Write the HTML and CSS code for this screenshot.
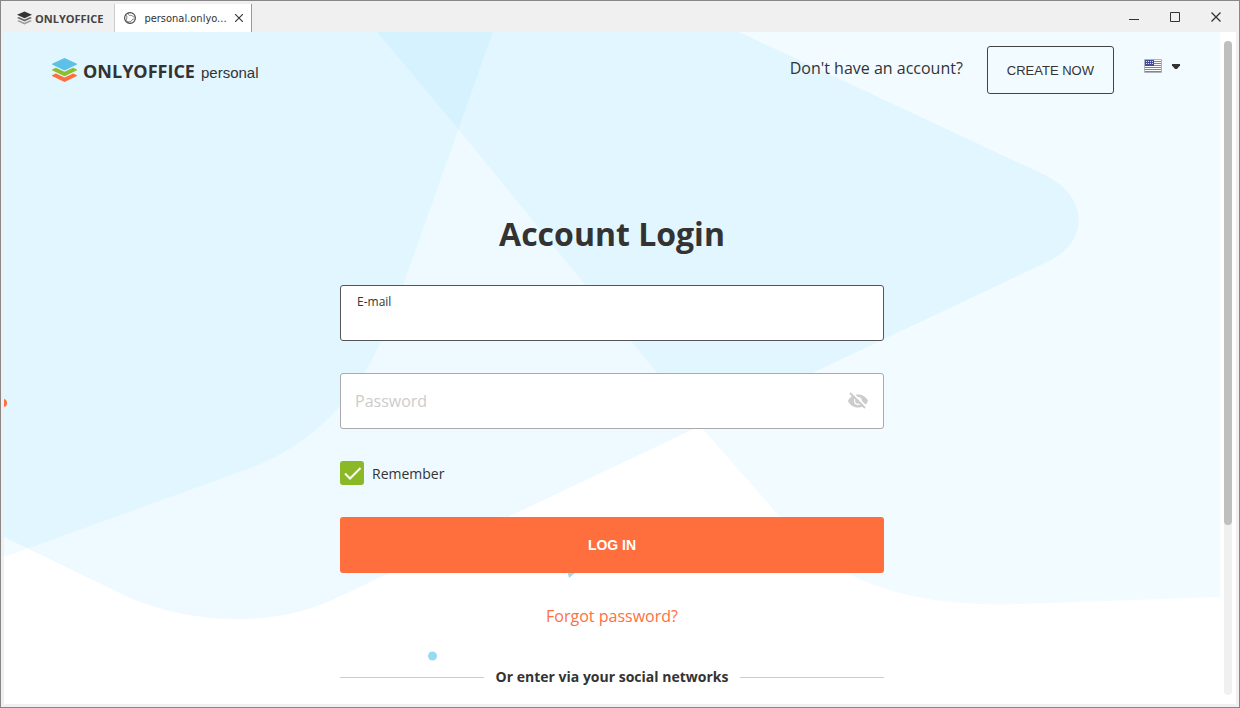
FILE: index.html
```html
<!DOCTYPE html>
<html lang="en">
<head>
  <meta charset="UTF-8">
  <title>ONLYOFFICE</title>
  <link rel="stylesheet" href="styles.css">
</head>
<body>

<div class="window">
  <div class="titlebar">
    <div class="tabs">
      <button class="tab home">
        <svg width="15" height="14" viewBox="0 0 16 14">
          <path fill="#333" d="M8 0l8 3.6-8 3.7-8-3.7z"/>
          <path fill="#6b6b6b" d="M0 6.900l2-.9 6 2.700 6-2.700 2 .9-8 3.700z"/>
          <path fill="#999" d="M0 10.200l2-.9 6 2.700 6-2.700 2 .9-8 3.700z"/>
        </svg>
        <span>ONLYOFFICE</span>
      </button>
      <div class="tab page-tab">
        <svg width="12" height="12" viewBox="0 0 12 12" fill="none" stroke="#444">
          <circle cx="6" cy="6" r="5.400" stroke-width="1.100"/>
          <path stroke-width=".7" d="M4.500 1c-1 2 .5 2.500 3 2.500 1.500.5 2.500 2 3.500 1.500M1.500 3c2 .5 1.500 3 .8 4.500C2 9 4 9.500 5 11M10.500 7c-1.500 0-2.500.5-3 1.800-.8 1.200-1.500 1-3 .7"/>
        </svg>
        <span class="tab-title">personal.onlyo...</span>
        <button class="tab-close" aria-label="Close tab">
          <svg width="8" height="8" viewBox="0 0 8 8"><path stroke="#333" stroke-width="1.100" d="M0 0l8 8M8 0L0 8"/></svg>
        </button>
      </div>
    </div>
    <div class="window-buttons">
      <button aria-label="Minimize">
        <svg width="12" height="12" viewBox="0 0 12 12"><path fill="#333" d="M1 8h10v1H1z"/></svg>
      </button>
      <button aria-label="Maximize">
        <svg width="12" height="12" viewBox="0 0 12 12"><path fill="none" stroke="#333" d="M1.500 1.500h9v9h-9z"/></svg>
      </button>
      <button aria-label="Close">
        <svg width="12" height="12" viewBox="0 0 12 12"><path stroke="#333" stroke-width="1.300" d="M1.500 1.500l9 9M10.500 1.500l-9 9"/></svg>
      </button>
    </div>
  </div>

  <div class="view">
    <div class="page">
      <svg class="backdrop" viewBox="0 0 1216 672" preserveAspectRatio="xMidYMin slice">
        <path fill="#55cdff" fill-opacity=".1" d="M0 0H735L1041 143C1087 166 1085 212 1041 231L326 569C266 595 188 592 126 566L0 505z"/>
        <path fill="#5fd2ff" fill-opacity=".08" d="M0 0H489L399 253C380 307 350 399 241 438L0 525z"/>
        <path fill="#5fd2ff" fill-opacity=".08" d="M373 0L455 98L698 396L776 485C835 558 920 575 1016 572L1216 565V0z"/>
        <circle cx="-1" cy="371" r="4" fill="#ff6f3d"/>
        <path fill="#97daf4" d="M563 538l9 2-7 6z"/>
        <circle cx="428.500" cy="624" r="4.500" fill="#97daf4"/>
      </svg>

      <div class="header">
        <a href="#" class="logo">
          <svg width="25" height="24" viewBox="0 0 26 25">
            <path fill="#ff6f3d" d="M0 18l4-1.800 9 4 9-4 4 1.800v.8L13 25 0 18.800z"/>
            <path fill="#8ebe2e" d="M0 12l4-1.800 9 4 9-4 4 1.800v.8L13 19 0 12.800z"/>
            <path fill="#5dc0e8" d="M13 0l13 6v.8L13 13 0 6.800V6z"/>
          </svg>
          <span class="brand">ONLYOFFICE</span>
          <span class="edition">personal</span>
        </a>
        <div class="account">
          <span class="question">Don't have an account?</span>
          <button class="create">CREATE NOW</button>
          <div class="language">
            <svg width="18" height="14" viewBox="0 0 18 14">
              <path fill="#fff" d="M0 0h18v14H0z"/>
              <path fill="#f0565b" d="M1 2h16v1H1zM1 4h16v1H1zM1 6h16v1H1zM1 8h16v1H1zM1 10h16v1H1zM1 12h16v1H1z"/>
              <path fill="#454a9c" d="M1 1h9v6H1z"/>
              <path stroke="#dfe0f5" stroke-dasharray="1 1" d="M2 2.500h8M2 4.500h8"/>
              <path fill="none" stroke="#aab4bb" d="M.5.5h17v13H.5z"/>
            </svg>
            <svg width="8" height="5" viewBox="0 0 8 5"><path fill="#333" d="M0 0h8v1.500L5 5H3L0 1.500z"/></svg>
            <select aria-label="Language">
              <option>English</option>
            </select>
          </div>
        </div>
      </div>

      <form class="login">
        <h1>Account Login</h1>
        <div class="field active">
          <label for="email">E-mail</label>
          <input type="email" id="email">
        </div>
        <div class="field">
          <input type="password" id="password" placeholder="Password" aria-label="Password">
          <button type="button" class="eye" aria-label="Show password">
            <svg width="20" height="18" viewBox="0 0 20 18">
              <path fill="#ccc" d="M10 2.500c4.500 0 8.300 2.600 10 6.500-1.700 3.900-5.500 6.500-10 6.500S1.700 12.900 0 9c1.700-3.900 5.500-6.500 10-6.500z"/>
              <circle cx="10" cy="9" r="4" fill="#fff"/>
              <circle cx="10" cy="9" r="2.800" fill="#ccc"/>
              <path stroke="#fff" stroke-width="2" d="M3.500 0l15 15"/>
              <path stroke="#ccc" stroke-width="2" d="M2 1l15 15"/>
            </svg>
          </button>
        </div>
        <label class="remember">
          <input type="checkbox" checked>
          <svg class="tick" width="24" height="24" viewBox="0 0 24 24"><path fill="none" stroke="#fff" stroke-width="2" d="M5 12.500l5 5L20.500 7"/></svg>
          <span>Remember</span>
        </label>
        <button class="submit">LOG IN</button>
        <a href="#" class="forgot">Forgot password?</a>
        <div class="social">Or enter via your social networks</div>
      </form>
    </div>
    <div class="scrollbar"><div class="thumb"></div></div>
  </div>
</div>

</body>
</html>
```
FILE: styles.css
```css
* {
  box-sizing: border-box;
}
body {
  margin: 0;
  font-family: 'Open Sans', sans-serif;
  color: #333;
}
button {
  border: none;
  background: none;
  padding: 0;
  color: inherit;
  cursor: pointer;
}
svg {
  display: block;
  flex: none;
}
.window {
  height: 100vh;
  display: flex;
  flex-direction: column;
  border: 1px solid #878787;
  padding: 0 3px 3px;
  background: #f0f0f0;
  overflow: hidden;
}

/* title bar */
.titlebar {
  display: flex;
  justify-content: space-between;
  height: 31px;
  flex: none;
}
.tabs {
  display: flex;
  align-items: flex-end;
}
.tab {
  display: flex;
  align-items: center;
  height: 28px;
}
.home {
  gap: 3px;
  padding: 0 11px 0 13px;
  color: #444;
  font: bold 11px 'Open Sans', sans-serif;
}
.page-tab {
  background: #fff;
  border-left: 1px solid #ccc;
  border-right: 1px solid #999;
  padding: 0 8px 0 9px;
  gap: 8px;
  font: 11px 'DejaVu Sans Condensed', 'DejaVu Sans', sans-serif;
}
.window-buttons {
  display: flex;
}
.window-buttons button {
  width: 41px;
  display: flex;
  align-items: center;
  justify-content: center;
}

/* page area */
.view {
  display: flex;
  flex: 1;
  min-height: 0;
  background: #fff;
}
.page {
  position: relative;
  flex: 1;
  overflow: hidden;
}
.backdrop {
  position: absolute;
  top: 0;
  left: 0;
  width: 100%;
  height: 100%;
}
.scrollbar {
  width: 8px;
  margin: 9px 4px;
  border-radius: 4px;
  background: #f0f0f0;
}
.thumb {
  height: 74%;
  border-radius: 4px;
  background: #bfbfbf;
}

.header {
  position: relative;
  display: flex;
  justify-content: space-between;
  align-items: flex-start;
  padding: 14px 40px 0 48px;
}
.logo {
  display: flex;
  align-items: center;
  gap: 6px;
  height: 48px;
  color: #333;
  text-decoration: none;
}
.brand {
  font-size: 18px;
  font-weight: bold;
  padding-top: 1px;
}
.edition {
  font-family: 'Liberation Sans', sans-serif;
  font-size: 15px;
  padding-top: 5px;
}
.account {
  display: flex;
  gap: 24px;
}
.question {
  font-size: 16px;
  line-height: 44px;
}
.create {
  height: 48px;
  padding: 0 19px;
  border: 1px solid #444;
  border-radius: 3px;
  font: 13px 'Liberation Sans', sans-serif;
}
.language {
  position: relative;
  display: flex;
  align-items: center;
  gap: 10px;
  height: 40px;
  margin-left: 6px;
}
.language select {
  position: absolute;
  inset: 0;
  opacity: 0;
}

/* login form */
.login {
  position: relative;
  width: 544px;
  max-width: 100%;
  margin: 0 auto;
  padding-top: 118px;
  display: flex;
  flex-direction: column;
  gap: 32px;
}
.login h1 {
  margin: 0 0 -3px;
  font-size: 32px;
  line-height: 44px;
  text-align: center;
}
.field {
  display: flex;
  height: 56px;
  padding: 0 15px 0 14px;
  border: 1px solid #aaa;
  border-radius: 3px;
  background: #fff;
}
.field.active {
  flex-direction: column;
  padding: 8px 16px;
  border-color: #555;
}
.field label {
  font-size: 12px;
  line-height: 16px;
}
.field input {
  flex: 1;
  min-width: 0;
  border: none;
  outline: none;
  padding: 0;
  background: none;
  font: 16px 'Open Sans', sans-serif;
}
.field input::placeholder {
  color: #ccc;
}
.remember {
  display: flex;
  align-items: center;
  align-self: flex-start;
  position: relative;
  gap: 8px;
  height: 24px;
  font-size: 14px;
}
.remember input {
  appearance: none;
  width: 24px;
  height: 24px;
  margin: 0;
  border-radius: 3px;
  background: #8bb825;
}
.tick {
  position: absolute;
  left: 0;
  top: 0;
  pointer-events: none;
}
.submit {
  height: 56px;
  border-radius: 3px;
  background: #ff6f3d;
  color: #fff;
  font: bold 14px 'Liberation Sans', sans-serif;
}
.forgot {
  align-self: center;
  color: #ff6f3d;
  font-size: 16px;
  line-height: 22px;
  text-decoration: none;
}
.social {
  display: flex;
  align-items: center;
  gap: 12px;
  margin-top: 8px;
  font-size: 14px;
  font-weight: bold;
  line-height: 20px;
}
.social::before,
.social::after {
  content: '';
  flex: 1;
  height: 1px;
  background: #ccc;
}
```
